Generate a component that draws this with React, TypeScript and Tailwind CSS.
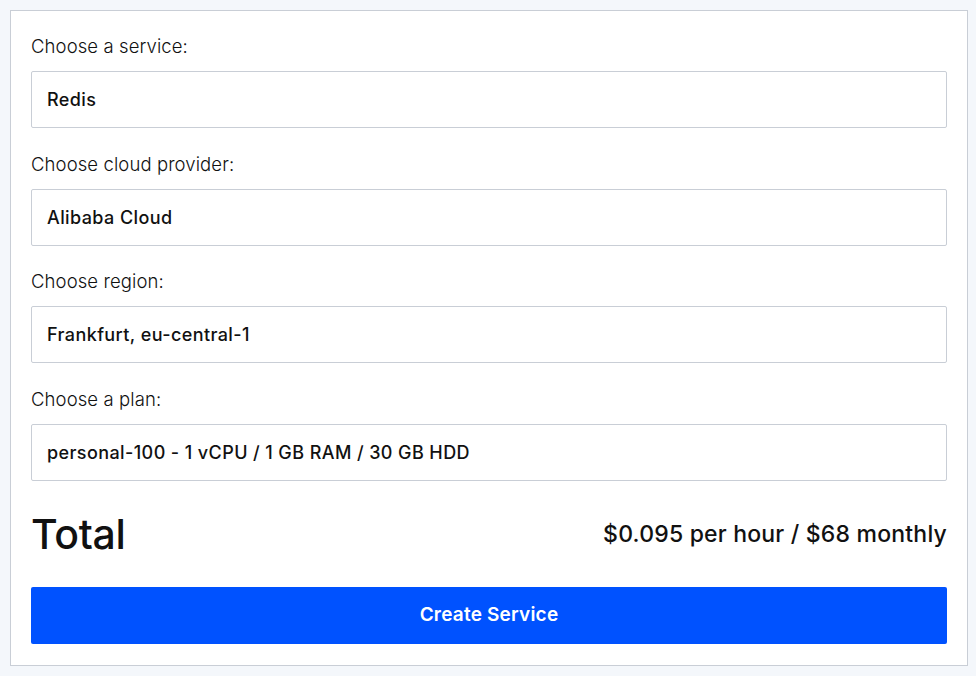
export default function App() {
  const fields = [
    ["Choose a service:", "Redis"],
    ["Choose cloud provider:", "Alibaba Cloud"],
    ["Choose region:", "Frankfurt, eu-central-1"],
    ["Choose a plan:", "personal-100 - 1 vCPU / 1 GB RAM / 30 GB HDD"],
  ];
  return (
    <div className="w-[976px] h-[676px] bg-[#f4f7fb] pt-[10px] pl-[10px]" style={{ fontFamily: "Inter, 'Noto Sans', sans-serif" }}>
      <div className="w-[958px] h-[656px] bg-white border border-[#c9ced6] px-[20px] pt-[21px] text-[#111]">
        {fields.map(([l, v], i) => (
          <div key={i} className={i > 0 ? "mt-[21.5px]" : ""}>
            <div className="h-[28px] leading-[28px] text-[18.5px] font-light tracking-[0.1px]">{l}</div>
            <div className="mt-[11px] h-[57px] border border-[#c9ced6] rounded-[2px] px-[15px] flex items-center text-[18px] font-medium tracking-[0.4px]">{v}</div>
          </div>
        ))}
        <div className="mt-[30px] h-[48px] flex items-center justify-between">
          <span className="text-[41px] font-medium tracking-[-0.3px]">Total</span>
          <span className="text-[23px] font-medium tracking-[0.2px]">$0.095 per hour / $68 monthly</span>
        </div>
        <div className="mt-[28px] h-[57px] bg-[#0052ff] rounded-[2px] flex items-center justify-center text-white text-[19px] font-semibold tracking-[0.2px]">Create Service</div>
      </div>
    </div>
  );
}
